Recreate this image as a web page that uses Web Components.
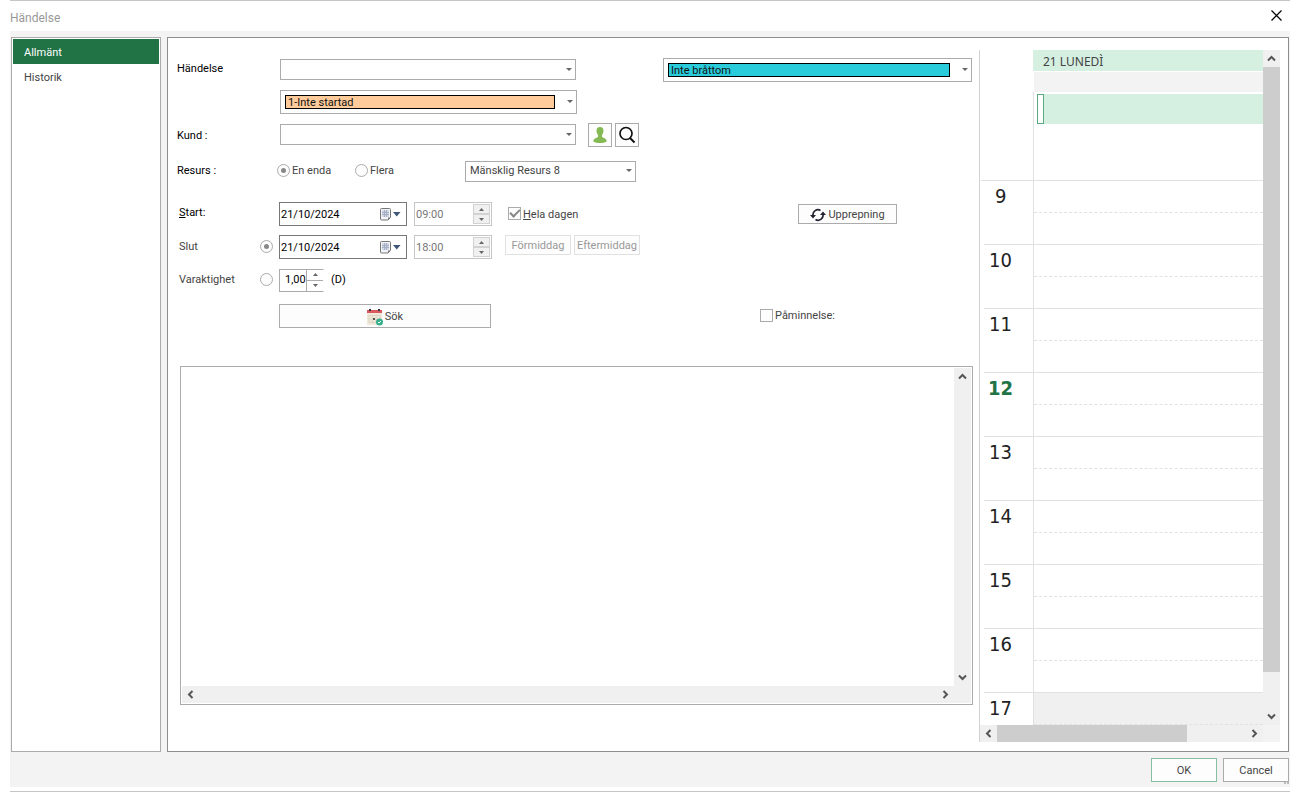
<!DOCTYPE html>
<html lang="sv">
<head>
<meta charset="utf-8">
<title>Händelse</title>
<style>
  html, body { margin: 0; background: #fff; }
  body { font: 11px/16px Roboto, "Noto Sans", sans-serif; color: #444; }
</style>
</head>
<body>
<event-dialog></event-dialog>
<script>
const define = (name, html, setup) => customElements.define(name, class extends HTMLElement {
  constructor() {
    super();
    this.attachShadow({ mode: 'open' }).innerHTML = '<style>*{box-sizing:border-box}:host([hidden]){display:none!important}</style>' + html;
  }
  connectedCallback() { if (setup) setup(this, this.shadowRoot); }
});

/* Drop-down: frame, slotted select, arrow */
define('combo-box', `
<style>
  :host { display: flex; box-sizing: border-box; position: relative; height: 21px; border: 1px solid #ababab; background: #fff; }
  ::slotted(select) { appearance: none; flex: 1; min-width: 0; margin: 0; padding: 0 4px; border: 0; border-radius: 0; background: transparent; font: inherit; color: #444; outline: 0; }
  :host([swatch]) { height: 24px; padding: 4px 21px 4px 4px; }
  :host([swatch]) ::slotted(select) { border: 1px solid #000; background: var(--swatch); color: #111; padding: 1px 2px 0; line-height: 12px; }
  svg { position: absolute; right: 3px; top: 50%; margin-top: -2px; pointer-events: none; }
</style>
<slot></slot>
<svg width="6" height="3" viewBox="0 0 6 3"><path d="M0 0h6L3 3z" fill="#666"/></svg>`);

/* Date field with calendar glyph */
define('date-field', `
<style>
  :host { display: flex; align-items: center; box-sizing: border-box; width: 128px; height: 24px; border: 1px solid #777; background: #fff; padding-right: 5px; }
  ::slotted(input) { flex: 1; min-width: 0; border: 0; padding: 1px 1px 0; margin: 0; font: inherit; color: #000; background: transparent; outline: 0; }
  svg { flex: none; }
</style>
<slot></slot>
<svg width="21" height="13" viewBox="0 0 21 13"><path d="M.5 1.500q0-1 1-1h8q1 0 1 1v8l-2.500 2.500h-6.500q-1 0-1-1z" fill="#f3f4f8" stroke="#777"/><path d="M8 12V9.500h2.500z" fill="#777"/><path d="M2 2h7v7H2z" fill="#d5daea"/><path d="M2 4.500h7M2 6.500h7M4.500 2v7M6.500 2v7" stroke="#a6aec4"/><path d="M13 4h7.500l-3.750 4.500z" fill="#3f5678"/></svg>`);

/* Number or time field with up and down buttons */
define('spin-field', `
<style>
  :host { display: flex; box-sizing: border-box; width: 78px; height: 24px; border: 1px solid #c6c6c6; background: #fff; padding: 1px; }
  ::slotted(input) { flex: 1; min-width: 0; border: 0; padding: 1px 0 0; margin: 0; font: inherit; color: #777; background: transparent; outline: 0; }
  div { display: flex; flex-direction: column; width: 17px; }
  button { flex: 1; display: grid; place-items: center; padding: 0; margin: 0; border: 1px solid #d2d2d2; background: #f0f0f0; }
  :host([plain]) { width: 45px; height: 23px; border-color: #ababab; border-right-color: #fff; padding: 0; }
  :host([plain]) ::slotted(input) { color: #000; padding: 0 0 0 5px; }
  :host([plain]) button { background: #fff; border: 0; border-left: 1px solid #ababab; }
  :host([plain]) button + button { border-top: 1px solid #ababab; }
</style>
<slot></slot>
<div>
  <button type="button" aria-label="Öka"><svg width="5" height="3"><path d="M0 3h5L2.500 0z" fill="#666"/></svg></button>
  <button type="button" aria-label="Minska"><svg width="5" height="3"><path d="M0 0h5L2.500 3z" fill="#666"/></svg></button>
</div>`);

/* Scroll bar; --thumb is the thumb's share of the track */
define('scroll-bar', `
<style>
  :host { display: flex; flex-direction: column; background: #f0f0f0; width: 17px; }
  :host([horizontal]) { flex-direction: row; width: auto; height: 17px; }
  button { flex: none; width: 17px; height: 17px; border: 0; padding: 0; margin: 0; background: transparent; display: grid; place-items: center; }
  .track { flex: 1; display: flex; flex-direction: inherit; }
  .thumb { flex: 0 0 var(--thumb, 0%); background: #cdcdcd; }
  path { fill: none; stroke: #555; stroke-width: 2; }
  :host([horizontal]) svg { transform: rotate(-90deg); }
</style>
<button type="button" aria-label="Bakåt"><svg width="9" height="9" viewBox="0 0 9 9"><path d="M1 6.500L4.500 3L8 6.500"/></svg></button>
<div class="track"><div class="thumb"></div></div>
<button type="button" aria-label="Framåt"><svg width="9" height="9" viewBox="0 0 9 9"><path d="M1 2.500L4.500 6L8 2.500"/></svg></button>`);

/* Frame for the push buttons */
define('push-button', `
<style>
  :host { display: inline-block; height: 24px; }
  button { display: flex; align-items: center; justify-content: center; gap: 2px; width: 100%; height: 100%; margin: 0; padding: 2px 0 0; border: 1px solid #ababab; background: #fdfdfd; font: inherit; color: #444; white-space: nowrap; }
  :host([title]) button { padding: 0; }
  :host([default]) button { border-color: #86bfa0; }
  button:disabled { border-color: #e1e1e1; color: #999; }
</style>
<button type="button"><slot></slot></button>`, (el, root) => {
  const b = root.querySelector('button');
  b.disabled = el.hasAttribute('off');
  if (el.title) b.setAttribute('aria-label', el.title);
});

define('side-menu', `
<style>
  :host { display: block; box-sizing: border-box; width: 150px; border: 1px solid #ababab; background: #fff; padding: 1px; }
  a { display: block; height: 25px; padding-left: 11px; line-height: 27px; color: #444; text-decoration: none; }
  a.on { background: #217346; color: #fff; }
</style>
<nav><a class="on" href="#allmant">Allmänt</a><a href="#historik">Historik</a></nav>`);

define('event-form', `
<style>
  :host { display: flex; flex-direction: column; box-sizing: border-box; padding: 20px 6px 46px 9px; }
  .row { display: grid; grid-template-columns: 102px minmax(0, 1fr) 309px; height: 24px; align-items: center; margin: 0 1px 9px 0; }
  .row.first { margin-bottom: 8px; }
  .row.wide { margin-bottom: 12px; }
  .row.group { margin-bottom: 19px; }
  .cell { display: flex; align-items: center; height: 24px; }
  .name { color: #000; padding-top: 2px; }
  .first .name { padding: 0 0 3px; }
  .group .name, .cell .name { padding: 0; }
  .sub { display: flex; justify-content: space-between; align-items: center; padding: 0 6px 0 2px; color: #444; }
  .sub.strong { color: #000; padding-bottom: 3px; }
  .main { width: 298px; padding-left: 1px; align-items: flex-start; }
  .main combo-box { flex: 1; }
  .main combo-box:not([swatch]) { margin: 1px 1px 0 0; }
  .icons { display: flex; gap: 3px; margin-left: 11px; }
  .icons push-button { width: 24px; }
  input[type=radio], input[type=checkbox] { appearance: none; flex: none; width: 13px; height: 13px; margin: 0 0 2px; border: 1px solid #ababab; background: #fdfdfd; display: grid; place-items: center; }
  input[type=radio] { border-radius: 50%; }
  input[type=radio]:checked::before { content: ""; width: 5px; height: 5px; border-radius: 50%; background: #888; }
  input[type=checkbox]:checked::before { content: ""; width: 4px; height: 8px; margin-top: -2px; border: solid #888; border-width: 0 2px 2px 0; transform: rotate(45deg); }
  .pick { display: flex; align-items: center; gap: 2px; }
  .pick span { padding-top: 2px; }
  .note { flex: 1; display: grid; grid-template-columns: minmax(0, 1fr) 17px; grid-template-rows: minmax(0, 1fr) 17px; margin: 29px 0 0 3px; padding: 1px; border: 1px solid #ababab; min-height: 120px; }
  textarea { resize: none; border: 0; outline: 0; margin: 0; padding: 2px; font: inherit; overflow: hidden; background: #fff; }
  .corner { background: #f0f0f0; }
</style>
<div class="row first">
  <label class="name" for="subject">Händelse</label>
  <div class="cell"><div class="cell main"><combo-box><select id="subject"><option></option></select></combo-box></div></div>
  <combo-box swatch style="--swatch:#2acbdb"><select aria-label="Prioritet"><option>Inte bråttom</option></select></combo-box>
</div>
<div class="row"><span></span>
  <div class="cell"><div class="cell main"><combo-box swatch style="--swatch:#ffcb9b"><select aria-label="Status"><option>1-Inte startad</option></select></combo-box></div></div>
</div>
<div class="row wide">
  <label class="name" for="client">Kund :</label>
  <div class="cell"><div class="cell main"><combo-box><select id="client"><option></option></select></combo-box></div>
    <div class="icons">
      <push-button title="Kund"><svg width="14" height="18" viewBox="0 0 14 18"><path d="M7 1c2.300 0 3.500 1.500 3.500 3.700 0 2-.8 3.300-1.500 4.100v2.200c1 .9 4.500 1.300 4.500 3.600v1.200C12 16.800 9.500 17 7 17S2 16.800.5 15.800v-1.200c0-2.300 3.500-2.700 4.500-3.600V8.800C4.300 8 3.500 6.700 3.500 4.700 3.500 2.500 4.700 1 7 1z" fill="#84b954"/></svg></push-button>
      <push-button title="Sök kund"><svg width="18" height="18" viewBox="0 0 18 18"><circle cx="8" cy="7.500" r="6" fill="none" stroke="#111" stroke-width="1.700"/><path d="M12 12L16.500 16.500" stroke="#111" stroke-width="2"/></svg></push-button>
    </div></div>
</div>
<div class="row group">
  <span class="name">Resurs :</span>
  <div class="cell">
    <label class="pick" style="width:78px;margin-left:-2px"><input type="radio" name="res" checked>En enda</label>
    <label class="pick" style="width:110px"><input type="radio" name="res">Flera</label>
    <combo-box style="width:171px"><select aria-label="Resurs"><option>Mänsklig Resurs 8</option></select></combo-box>
  </div>
</div>
<div class="row">
  <label class="sub strong" for="start"><span><u>S</u>tart:</span></label>
  <div class="cell">
    <date-field><input id="start" value="21/10/2024"></date-field>
    <spin-field style="margin:0 16px 0 7px"><input aria-label="Starttid" value="09:00" disabled></spin-field>
    <label class="pick"><input type="checkbox" checked><span><u>H</u>ela dagen</span></label>
  </div>
  <push-button style="width:99px;height:20px;margin-left:135px"><svg width="16" height="14" viewBox="0 0 16 14"><path d="M10.500 2.500A5 5 0 0 0 3 7.500M5.500 11.500A5 5 0 0 0 13 6.500" fill="none" stroke="#223" stroke-width="1.700"/><path d="M0 7h6L3 10.500zM10 7h6L13 3.500z" fill="#223"/></svg>Upprepning</push-button>
</div>
<div class="row">
  <div class="sub"><label for="byend">Slut</label><input type="radio" id="byend" name="mode" checked></div>
  <div class="cell">
    <date-field><input aria-label="Slutdatum" value="21/10/2024"></date-field>
    <spin-field style="margin:0 13px 0 7px"><input aria-label="Sluttid" value="18:00" disabled></spin-field>
    <div class="icons" style="margin:0 0 4px"><push-button off style="width:66px;height:20px">Förmiddag</push-button><push-button off style="width:66px;height:20px">Eftermiddag</push-button></div>
  </div>
</div>
<div class="row wide">
  <div class="sub"><label for="bylen">Varaktighet</label><input type="radio" id="bylen" name="mode"></div>
  <div class="cell"><spin-field plain><input aria-label="Dagar" value="1,00"></spin-field><span class="name" style="margin-left:7px">(D)</span></div>
</div>
<div class="row">
  <span></span>
  <push-button style="width:212px"><svg width="16" height="17" viewBox="0 0 16 17"><path d="M0 3h15v13H0z" fill="#efe9dc"/><path d="M0 1h15v3H0z" fill="#d9595f"/><path d="M3 0v2M12 0v2" stroke="#334" stroke-width="2"/><path d="M2 6.500h11v7H2zM2 10h11M5.500 7v7M9 7v7" fill="none" stroke="#ddd5c4"/><path d="M6 9h2v2H6z" fill="#555"/><circle cx="12.500" cy="13" r="3.500" fill="#35b08b"/><path d="M11 13l1 1L14 12" fill="none" stroke="#fff"/></svg>Sök</push-button>
  <label class="pick" style="padding-left:97px"><input type="checkbox">Påminnelse:</label>
</div>
<div class="note"><textarea aria-label="Anteckning"></textarea><scroll-bar></scroll-bar><scroll-bar horizontal></scroll-bar><div class="corner"></div></div>`);

/* One hour of the day view */
define('hour-row', `
<style>
  :host { display: grid; grid-template-columns: 53px 1fr; height: 64px; flex: none; }
  .hour { margin-left: 4px; border-top: 1px solid #e1e1e1; padding: 2px 0 0 5px; font: 20px/27px "DejaVu Sans Condensed", "Noto Sans", sans-serif; color: #222; }
  :host([single]) .hour { margin-left: 1px; padding-left: 14px; }
  :host([now]) .hour { color: #217346; font-weight: bold; padding-left: 4px; }
  .slots { border: solid #e1e1e1; border-width: 1px 0 0 1px; }
  .slots div { height: 32px; border-bottom: 1px dashed #e1e1e1; }
  :host([closed]) .slots { background: #f0f0f0; }
</style>
<div class="hour"><slot></slot></div><div class="slots"><div></div></div>`);

define('day-view', `
<style>
  :host { display: grid; box-sizing: border-box; width: 301px; grid-template-columns: minmax(0, 1fr) 17px; grid-template-rows: minmax(0, 1fr) 17px; border-left: 1px solid #d2d2d2; }
  .view { display: flex; flex-direction: column; overflow: hidden; min-height: 0; contain: size; }
  .top { margin-left: 53px; height: 130px; flex: none; }
  .date { height: 21px; padding-left: 10px; background: #d5f0e1; font: 12px/23px "Noto Sans", sans-serif; color: #444; }
  .bar { height: 20px; margin: 1px 0 0 1px; background: #f3f3f3; }
  .allday { height: 88px; padding: 2px 0 0 3px; border-left: 1px solid #e1e1e1; }
  .event { height: 30px; background: #d5f0e1; }
  .event div { width: 7px; height: 30px; background: #fff; border: 1px solid #5aaa80; }
  .corner { background: #f3f3f3; }
</style>
<div class="view">
  <div class="top"><div class="date">21 LUNEDÌ</div><div class="bar"></div><div class="allday"><div class="event"><div></div></div></div></div>
  <hour-row single>9</hour-row><hour-row>10</hour-row><hour-row>11</hour-row><hour-row now>12</hour-row><hour-row>13</hour-row><hour-row>14</hour-row><hour-row>15</hour-row><hour-row>16</hour-row><hour-row closed>17</hour-row>
</div>
<scroll-bar style="--thumb:94.4%"></scroll-bar>
<scroll-bar horizontal style="--thumb:76.4%"></scroll-bar>
<div class="corner"></div>`);

define('event-dialog', `
<style>
  :host { display: flex; flex-direction: column; box-sizing: border-box; min-height: 100vh; margin: 0 10px; border: solid #c6c6c6; border-width: 1px 0; padding-bottom: 4px; }
  header { display: flex; justify-content: space-between; align-items: center; height: 30px; flex: none; }
  h1 { margin: 3px 0 0; font-size: 12px; font-weight: normal; color: #999; }
  header button { border: 0; background: none; padding: 0 0 2px; width: 28px; height: 28px; display: grid; place-items: center; }
  main { flex: 1; display: flex; gap: 6px; background: #f3f3f3; padding: 6px 1px 0; }
  .panel { flex: 1; display: flex; min-width: 0; border: 1px solid #8e8e8e; background: #fff; }
  event-form { flex: 1; min-width: 0; }
  day-view { margin: 12px 8px 9px 0; }
  footer { position: relative; display: flex; justify-content: flex-end; gap: 6px; height: 35px; padding: 6px 1px 0; background: #f3f3f3; flex: none; }
  footer push-button { width: 66px; }
  .grip { position: absolute; right: 0; bottom: 2px; }
</style>
<header><h1>Händelse</h1><button type="button" aria-label="Stäng"><svg width="11" height="11" viewBox="0 0 11 11"><path d="M.5.5l10 10M10.500.5l-10 10" stroke="#000" stroke-width="1.200"/></svg></button></header>
<main><side-menu></side-menu><div class="panel"><event-form></event-form><day-view></day-view></div></main>
<footer><push-button default>OK</push-button><push-button>Cancel</push-button><svg class="grip" width="6" height="3"><path d="M0 0h2v2H0zM3 0h2v2H3z" fill="#bbb"/></svg></footer>`);
</script>
</body>
</html>
